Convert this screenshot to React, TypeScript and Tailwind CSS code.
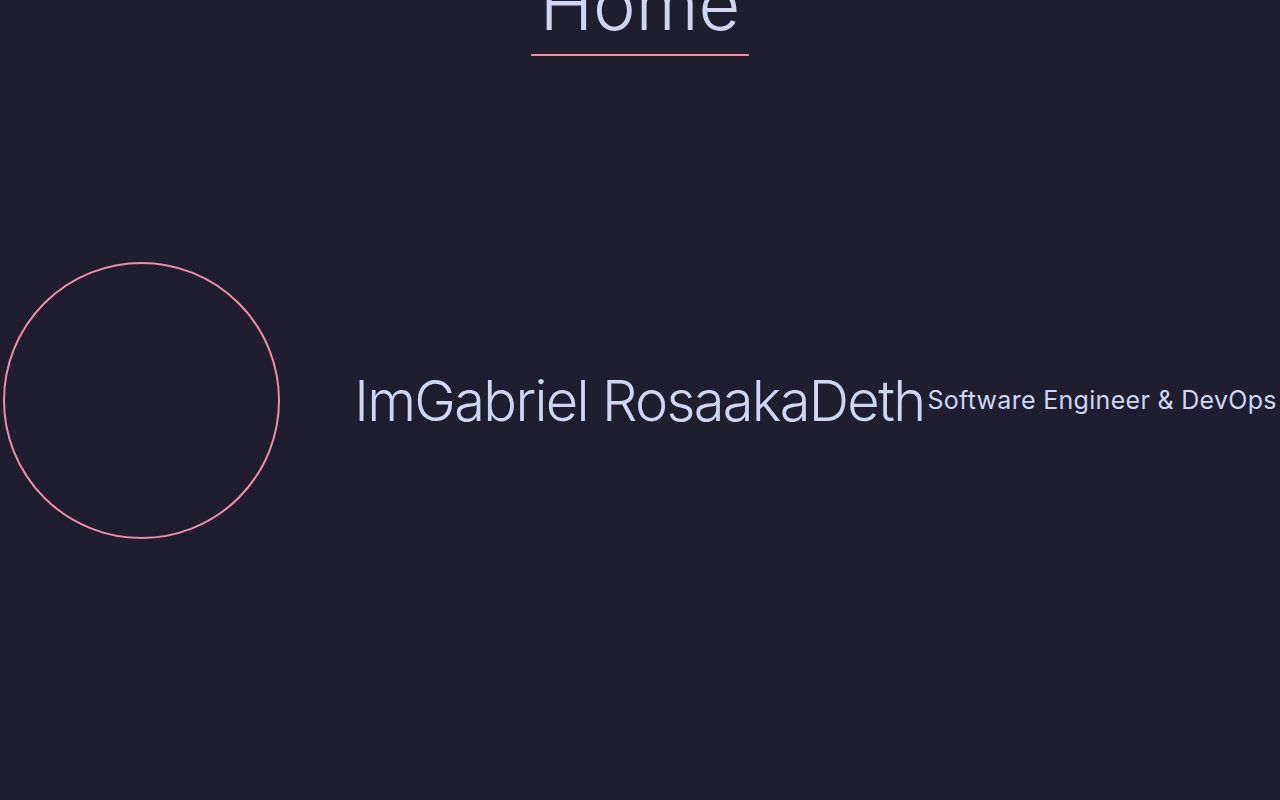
export default function App() {
  return (
    <div className="min-h-screen overflow-hidden bg-[#1e1e2e] text-[#cdd6f4] font-['Inter',sans-serif]">
      {/* page title */}
      <header className="flex h-[60px] justify-center">
        <h1 className="-mt-[32px] h-fit border-b-2 border-[#f38ba8] px-[9px] pb-[14px] text-[72px] font-light leading-none">
          Home
        </h1>
      </header>

      {/* intro row */}
      <section className="mt-[202px] flex items-center justify-center">
        <div className="mr-[74px] h-[277px] w-[277px] shrink-0 rounded-full border-2 border-[#f38ba8]" />
        <h2 className="shrink-0 whitespace-nowrap text-[56px] font-light leading-none tracking-[-1.7px]">
          Im<span>Gabriel Rosa</span>aka<span>Deth</span>
        </h2>
        <p className="ml-[3px] shrink-0 whitespace-nowrap text-[25px] font-normal leading-none tracking-[0.3px]">
          Software Engineer &amp; DevOps
        </p>
      </section>
    </div>
  );
}
